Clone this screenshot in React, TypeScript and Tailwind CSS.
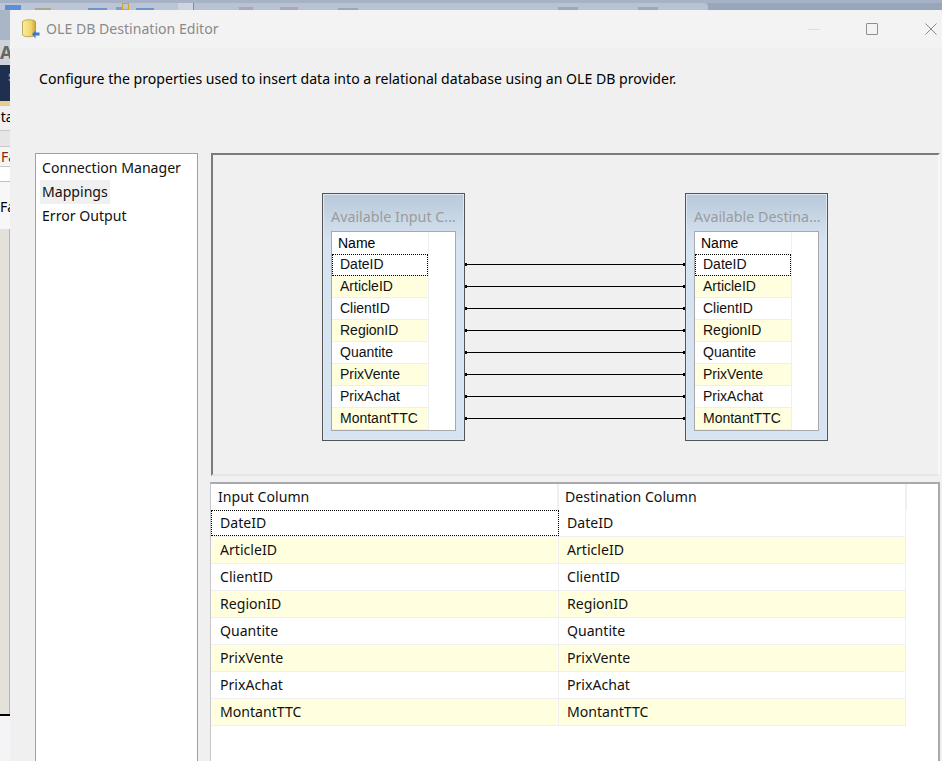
// App.tsx
const columns = ['DateID', 'ArticleID', 'ClientID', 'RegionID', 'Quantite', 'PrixVente', 'PrixAchat', 'MontantTTC'];
const navItems = ['Connection Manager', 'Mappings', 'Error Output'];

const uiFont = "[font-family:'Noto_Sans','Open_Sans',sans-serif]";
const boxFont = "[font-family:'Liberation_Sans',Arial,sans-serif]";

const DbIcon = () => (
  <svg width="18" height="20" viewBox="0 0 18 20" className="shrink-0">
    <defs>
      <linearGradient id="can" x1="0" x2="1" y1="0" y2="0">
        <stop offset="0" stopColor="#fbeea0" />
        <stop offset="0.65" stopColor="#f0d568" />
        <stop offset="1" stopColor="#c9a53a" />
      </linearGradient>
    </defs>
    <path d="M0.5 3C0.5 0 13.5 0 13.5 3V15.5C13.5 18.5 0.5 18.5 0.5 15.5Z" fill="url(#can)" stroke="#a88a2c" strokeWidth="0.7" />
    <path d="M10 15L13.5 11.5V13.5H17.5V16.5H13.5V19.5Z" fill="#3f78c4" />
  </svg>
);

const ColumnBox = ({ title }: { title: string }) => (
  <div className="w-[143px] h-[248px] border border-[#555] bg-[linear-gradient(#b9c9d9_0px,#d6e3f1_48px,#d6e3f1_100%)] px-2 pt-[37px] shadow-[inset_0_0_0_1px_#dfe7f0]">
    <div className={`absolute -mt-[24px] text-[14.3px] leading-[20px] text-[#9b9b9b] whitespace-nowrap ${uiFont}`}>{title}</div>
    <div className={`w-[125px] h-[200px] border border-[#a9a9ad] bg-white flex ${boxFont}`}>
      <div className="w-[97px] border-r border-[#efefef]">
        <div className="h-[22px] pl-[6px] text-[14px] leading-[22px] text-black">Name</div>
        {columns.map((col, i) => (
          <div
            key={col}
            className={`h-[22px] pl-2 text-[14px] leading-[21px] text-[#111] border-b border-[#efefef] ${i === 0 ? 'outline-1 outline-dotted -outline-offset-1 outline-black' : ''} ${i % 2 === 1 ? 'bg-[#ffffe0]' : 'bg-white'}`}
          >
            {col}
          </div>
        ))}
      </div>
    </div>
  </div>
);

const Connectors = () => (
  <div className="w-[220px] pt-[60px] flex flex-col">
    {columns.map(col => (
      <div key={col} className="h-[22px] flex items-center">
        <span className="w-[2px] h-[3px] bg-black" />
        <span className="flex-1 h-px bg-black" />
        <span className="w-[2px] h-[3px] bg-black" />
      </div>
    ))}
  </div>
);

export default function App() {
  return (
    <div className="w-[942px] h-[761px] overflow-hidden flex flex-col bg-[#f0f0f0]">
      {/* app behind the dialog, top edge */}
      <div className="h-[10px] shrink-0 flex flex-col bg-[#98a6bb]">
        <div className="h-[3px] bg-[#a7b2c6]" />
        <div className="flex-1 flex">
          <div className="w-[178px] bg-[#bcc5d5] flex items-end">
            <span className="ml-[5px] w-[16px] h-[5px] bg-[#5b8fd8]" />
            <span className="ml-[14px] w-[16px] h-[2px] bg-[#a8a98c]" />
            <span className="ml-[37px] w-[19px] h-[2px] bg-[#6f94cc]" />
            <span className="ml-[9px] w-[6px] h-[3px] bg-[#7fa0cc]" />
            <span className="w-[7px] h-[7px] border border-[#d9a520]" />
            <span className="ml-[7px] w-[18px] h-[2px] bg-[#6f94cc]" />
          </div>
          <div className="w-[15px] bg-[#ced5e2]" />
          <div className="w-px bg-[#7e8ca3]" />
          <div className="w-[514px] bg-[#b9c2d2] rounded-tr-[4px] flex items-end">
            <span className="ml-[45px] w-[14px] h-[3px] bg-[#a3abba]" />
            <span className="ml-[27px] w-[18px] h-[3px] bg-[#a3abba]" />
            <span className="ml-[40px] w-[20px] h-[2px] bg-[#9ea7b6]" />
            <span className="ml-[200px] w-[20px] h-[3px] bg-[#9ea7b6]" />
            <span className="ml-[60px] w-[20px] h-[3px] bg-[#9ea7b6]" />
          </div>
        </div>
      </div>
      <div className="flex-1 flex min-h-0">
        {/* app behind the dialog, left edge */}
        <div className={`w-[10px] shrink-0 flex flex-col overflow-hidden text-[14px] bg-[#e8e8e8] ${uiFont}`}>
          <div className="h-[30px] bg-[#a9b6c8]" />
          <div className="h-[25px] bg-[#cfd3da] text-[#666] font-bold text-[18px] leading-[25px]">A</div>
          <div className="h-[40px] bg-[#1e2f4f] border-b-[4px] border-[#e9cf8c] text-[#6f8fc0] font-bold pl-[8px]">s</div>
          <div className="h-[26px] bg-[#f0f0f0] border-y border-[#c8c8c8] leading-[22px] whitespace-nowrap -indent-[8px]">nta</div>
          <div className="h-[15px] bg-[#e6e6e6]" />
          <div className="h-[21px] bg-[#f5f5f5] border-y border-[#c8c8c8] pl-[1px] leading-[19px] text-[#7a2a10]">Fa</div>
          <div className="h-[15px] bg-white border-b border-[#9ccbe6]" />
          <div className="h-[47px] bg-[#f7f7f7] pt-[17px] leading-[16px]">Fa</div>
          <div className="h-[485px] bg-[#e4e0da] border-r border-[#b5b5b5]" />
          <div className="flex-1 bg-[#f4f4f6] border-t-2 border-black" />
        </div>
        {/* dialog */}
        <div className="flex-1 min-w-0 flex flex-col">
          <div className={`h-[38px] shrink-0 bg-[#f3f3f3] flex items-center pl-[12px] ${uiFont}`}>
            <DbIcon />
            <span className="ml-[6px] text-[14.1px] text-[#8a8a8a] whitespace-nowrap">OLE DB Destination Editor</span>
            <span className="ml-auto w-[12px] h-px bg-[#ddd]" />
            <span className="ml-[46px] w-[12px] h-[12px] border border-[#8f8f8f] rounded-[1px]" />
            <svg width="12" height="12" viewBox="0 0 12 12" className="ml-[47px] mr-[5px]">
              <path d="M0.5 0.5L11.5 11.5M11.5 0.5L0.5 11.5" stroke="#8a8a8a" strokeWidth="1" fill="none" />
            </svg>
          </div>
          <div className={`h-[105px] shrink-0 pl-[29px] pt-[20px] text-[14.1px] leading-[21px] text-black whitespace-nowrap ${uiFont}`}>
            Configure the properties used to insert data into a relational database using an OLE DB provider.
          </div>
          <div className="flex-1 min-h-0 flex pl-[25px]">
            <div className={`w-[163px] shrink-0 border border-b-0 border-[#a0a0a5] bg-white pl-[4px] pt-[2px] text-[14.1px] text-[#111] ${uiFont}`}>
              {navItems.map(item => (
                <div key={item} className="h-[24px] leading-[24px]">
                  <span className={`inline-block h-[24px] pl-[2px] pr-[2px] ${item === 'Mappings' ? 'bg-[#f0f0f0]' : ''}`}>{item}</span>
                </div>
              ))}
            </div>
            <div className="ml-[12px] w-[730px] flex flex-col">
              <div className="relative ml-px h-[323px] shrink-0 border-t-2 border-l-2 border-t-[#7b7b7b] border-l-[#7b7b7b] border-b-2 border-r-2 border-b-[#e6e6e6] border-r-[#f8f8f8] flex pl-[109px] pt-[38px]">
                <ColumnBox title="Available Input C..." />
                <Connectors />
                <ColumnBox title="Available Destina..." />
              </div>
              <div className={`mt-[6px] flex-1 border-t-2 border-l border-r-2 border-[#a8a8ad] border-l-[#c8c8cc] bg-white text-[14.1px] ${uiFont}`}>
                <div className="h-[26px] flex">
                  <div className="w-[348px] border-r-2 border-[#efefef] pl-[7px] leading-[25px] text-[#111]">Input Column</div>
                  <div className="w-[348px] border-r-2 border-[#efefef] pl-[6px] leading-[25px] text-[#111]">Destination Column</div>
                </div>
                {columns.map((col, i) => (
                  <div key={col} className={`w-[695px] h-[27px] flex border-b border-r border-[#efefef] ${i % 2 === 1 ? 'bg-[#ffffe0]' : 'bg-white'}`}>
                    <div className={`w-[348px] border-r border-[#efefef] pl-[9px] leading-[25px] text-[#111] ${i === 0 ? 'outline-1 outline-dotted -outline-offset-1 outline-black' : ''}`}>{col}</div>
                    <div className="flex-1 pl-[8px] leading-[25px] text-[#111]">{col}</div>
                  </div>
                ))}
              </div>
            </div>
          </div>
        </div>
      </div>
    </div>
  );
}
